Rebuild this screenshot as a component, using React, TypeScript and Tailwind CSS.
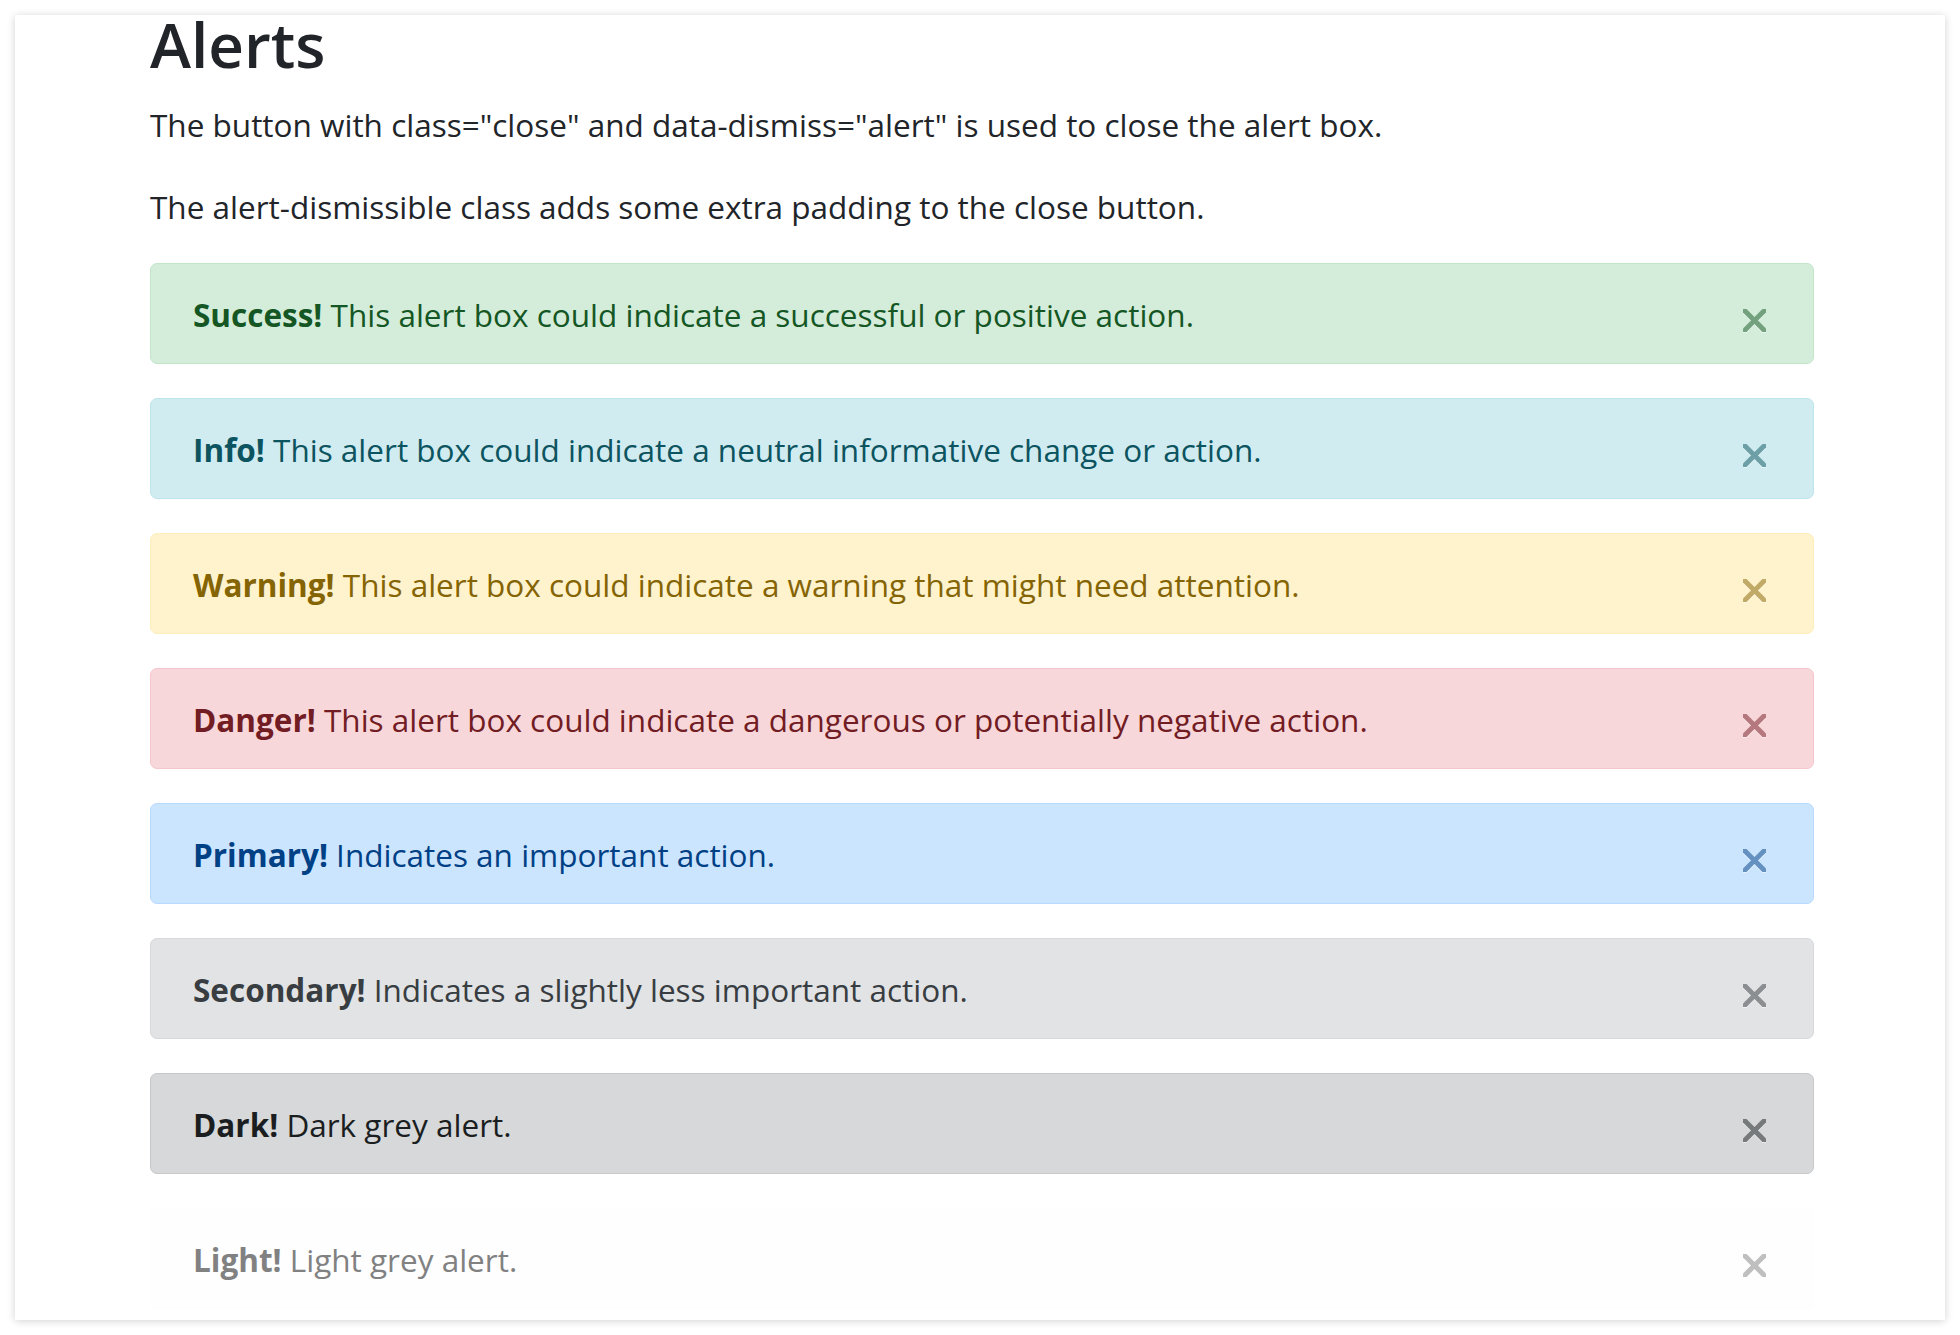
import React from "react";

type Variant = {
  label: string;
  text: string;
  box: string;
  color: string;
};

const alerts: Variant[] = [
  {
    label: "Success!",
    text: "This alert box could indicate a successful or positive action.",
    box: "bg-[#d4edda] border-[#c3e6cb]",
    color: "text-[#155724]",
  },
  {
    label: "Info!",
    text: "This alert box could indicate a neutral informative change or action.",
    box: "bg-[#d1ecf1] border-[#bee5eb]",
    color: "text-[#0c5460]",
  },
  {
    label: "Warning!",
    text: "This alert box could indicate a warning that might need attention.",
    box: "bg-[#fff3cd] border-[#ffeeba]",
    color: "text-[#856404]",
  },
  {
    label: "Danger!",
    text: "This alert box could indicate a dangerous or potentially negative action.",
    box: "bg-[#f8d7da] border-[#f5c6cb]",
    color: "text-[#721c24]",
  },
  {
    label: "Primary!",
    text: "Indicates an important action.",
    box: "bg-[#cce5ff] border-[#b8daff]",
    color: "text-[#004085]",
  },
  {
    label: "Secondary!",
    text: "Indicates a slightly less important action.",
    box: "bg-[#e2e3e5] border-[#d6d8db]",
    color: "text-[#383d41]",
  },
  {
    label: "Dark!",
    text: "Dark grey alert.",
    box: "bg-[#d6d8d9] border-[#c6c8ca]",
    color: "text-[#1b1e21]",
  },
  {
    label: "Light!",
    text: "Light grey alert.",
    box: "bg-[#fefefe] border-[#fdfdfe]",
    color: "text-[#818182]",
  },
];

function CloseIcon() {
  return (
    <svg width="23" height="23" viewBox="0 0 23 23" className="block">
      <line x1="-3" y1="-3" x2="26" y2="26" stroke="currentColor" strokeWidth="5" />
      <line x1="26" y1="-3" x2="-3" y2="26" stroke="currentColor" strokeWidth="5" />
    </svg>
  );
}

function Alert({ a }: { a: Variant }) {
  return (
    <div
      className={`relative mb-[34px] rounded-[7px] border pl-[42px] pr-[120px] pt-[26px] pb-[24px] leading-[49px] ${a.box} ${a.color}`}
    >
      <strong className="font-bold">{a.label}</strong> {a.text}
      <button
        type="button"
        aria-label="Close"
        className="absolute right-[47px] top-[45px] opacity-50 drop-shadow-[0_1px_0_#ffffff]"
      >
        <CloseIcon />
      </button>
    </div>
  );
}

export default function App() {
  return (
    <div className="h-[1335px] w-full overflow-hidden bg-white p-[15px] font-['Open_Sans',sans-serif] text-[31.5px] text-[#212529]">
      <div className="h-[1305px] bg-white pl-[135px] pr-[131px] pt-px shadow-[0_1px_8px_rgba(0,0,0,0.18)]">
        <h2 className="mb-[28px] text-[62px] font-semibold leading-[56px]">Alerts</h2>
        <p className="mb-[33px] leading-[49px]">
          The button with class="close" and data-dismiss="alert" is used to close the alert box.
        </p>
        <p className="mb-[32px] leading-[49px]">
          The alert-dismissible class adds some extra padding to the close button.
        </p>
        {alerts.map((a) => (
          <Alert key={a.label} a={a} />
        ))}
      </div>
    </div>
  );
}
